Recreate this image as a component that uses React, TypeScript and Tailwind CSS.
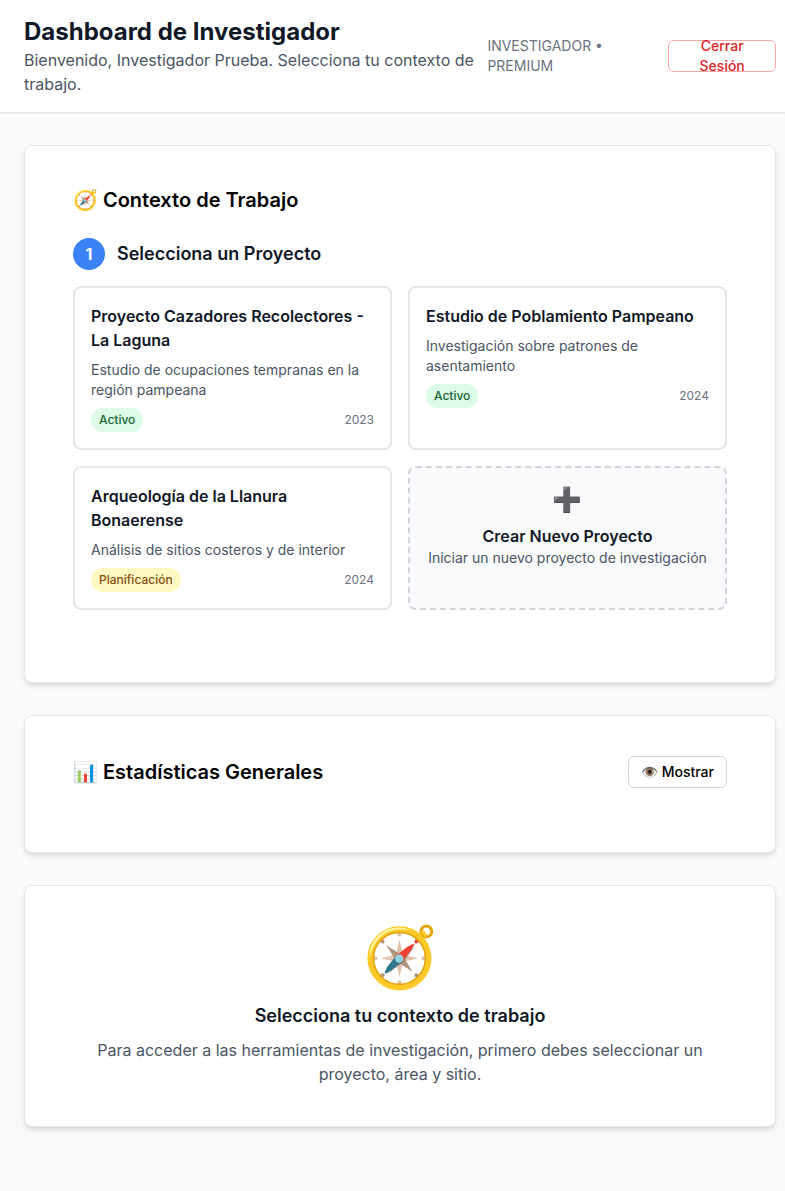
import type { ReactNode } from 'react';

function Card({ className = '', children }: { className?: string; children: ReactNode }) {
  return <section className={`rounded-lg border border-gray-200 bg-white px-12 shadow-md ${className}`}>{children}</section>;
}

type Project = { name: string; description: string; status: string; year: string; badge: string };

const projects: Project[] = [
  { name: 'Proyecto Cazadores Recolectores - La Laguna', description: 'Estudio de ocupaciones tempranas en la región pampeana', status: 'Activo', year: '2023', badge: 'bg-[#dcfce7] text-[#166534]' },
  { name: 'Estudio de Poblamiento Pampeano', description: 'Investigación sobre patrones de asentamiento', status: 'Activo', year: '2024', badge: 'bg-[#dcfce7] text-[#166534]' },
  { name: 'Arqueología de la Llanura Bonaerense', description: 'Análisis de sitios costeros y de interior', status: 'Planificación', year: '2024', badge: 'bg-[#fef9c3] text-[#854d0e]' },
];

function ProjectCard({ project }: { project: Project }) {
  return (
    <div className="rounded-lg border-2 border-[#e5e7eb] p-4">
      <h4 className="mb-2 font-semibold leading-6 text-[#111827]">{project.name}</h4>
      <p className="mb-2 text-sm text-[#4b5563]">{project.description}</p>
      <div className="flex items-center justify-between text-xs">
        <span className={`rounded-full px-2 py-1 font-medium ${project.badge}`}>{project.status}</span>
        <span className="text-[#6b7280]">{project.year}</span>
      </div>
    </div>
  );
}

export default function App() {
  return (
    <div className="min-h-[1191px] bg-[#f9fafb] font-[Inter,'Noto_Color_Emoji',sans-serif] text-black">
      <header className="flex h-[113px] items-center border-b border-[#e5e7eb] bg-white pl-6 shadow-xs">
        <div className="w-[463.4px] shrink-0">
          <h1 className="text-2xl font-bold leading-8 text-[#111827]">Dashboard de Investigador</h1>
          <p className="text-base text-[#4b5563]">Bienvenido, Investigador Prueba. Selecciona tu contexto de trabajo.</p>
        </div>
        <div className="w-[164.8px] shrink-0 text-sm text-[#6b7280]">INVESTIGADOR •<br />PREMIUM</div>
        <button className="ml-4 flex h-8 w-[108px] shrink-0 items-center justify-center rounded-md border border-[#fca5a5] bg-white px-3 text-center text-sm font-medium text-[#dc2626]">Cerrar Sesión</button>
      </header>

      <main className="flex flex-col gap-8 pt-8 pr-[9px] pb-16 pl-6">
        <Card className="h-[538px] pt-10">
          <h2 className="mb-6 text-xl font-semibold leading-7">🧭 Contexto de Trabajo</h2>
          <div className="mb-4 flex items-center gap-3">
            <span className="flex size-8 items-center justify-center rounded-full bg-[#3b82f6] font-bold text-white">1</span>
            <h3 className="text-lg font-semibold text-[#111827]">Selecciona un Proyecto</h3>
          </div>
          <div className="grid grid-cols-2 gap-4">
            {projects.map((project) => <ProjectCard key={project.name} project={project} />)}
            <button className="flex flex-col items-center rounded-lg border-2 border-dashed border-[#d1d5db] bg-[#f9fafb] pt-4 text-center">
              <span className="mb-2 pl-[0.4px] text-2xl leading-8">➕</span>
              <span className="font-semibold leading-6 text-[#111827]">Crear Nuevo Proyecto</span>
              <span className="text-sm text-[#4b5563]">Iniciar un nuevo proyecto de investigación</span>
            </button>
          </div>
        </Card>

        <Card className="h-[138px] pt-10">
          <div className="flex items-center justify-between">
            <h2 className="text-xl font-semibold">📊 Estadísticas Generales</h2>
            <button className="h-8 rounded-md border border-[#d1d5db] bg-white px-3 text-sm font-medium"><span className="-mr-[0.5px] ml-[0.5px]">👁️</span> Mostrar</button>
          </div>
        </Card>

        <Card className="h-[242px] pt-10 text-center">
          <div className="mb-4 pl-px text-6xl leading-[60px]">🧭</div>
          <h3 className="mb-2 text-lg font-semibold text-[#111827]">Selecciona tu contexto de trabajo</h3>
          <p className="text-base text-[#4b5563]">Para acceder a las herramientas de investigación, primero debes seleccionar un proyecto, área y sitio.</p>
        </Card>
      </main>
    </div>
  );
}
